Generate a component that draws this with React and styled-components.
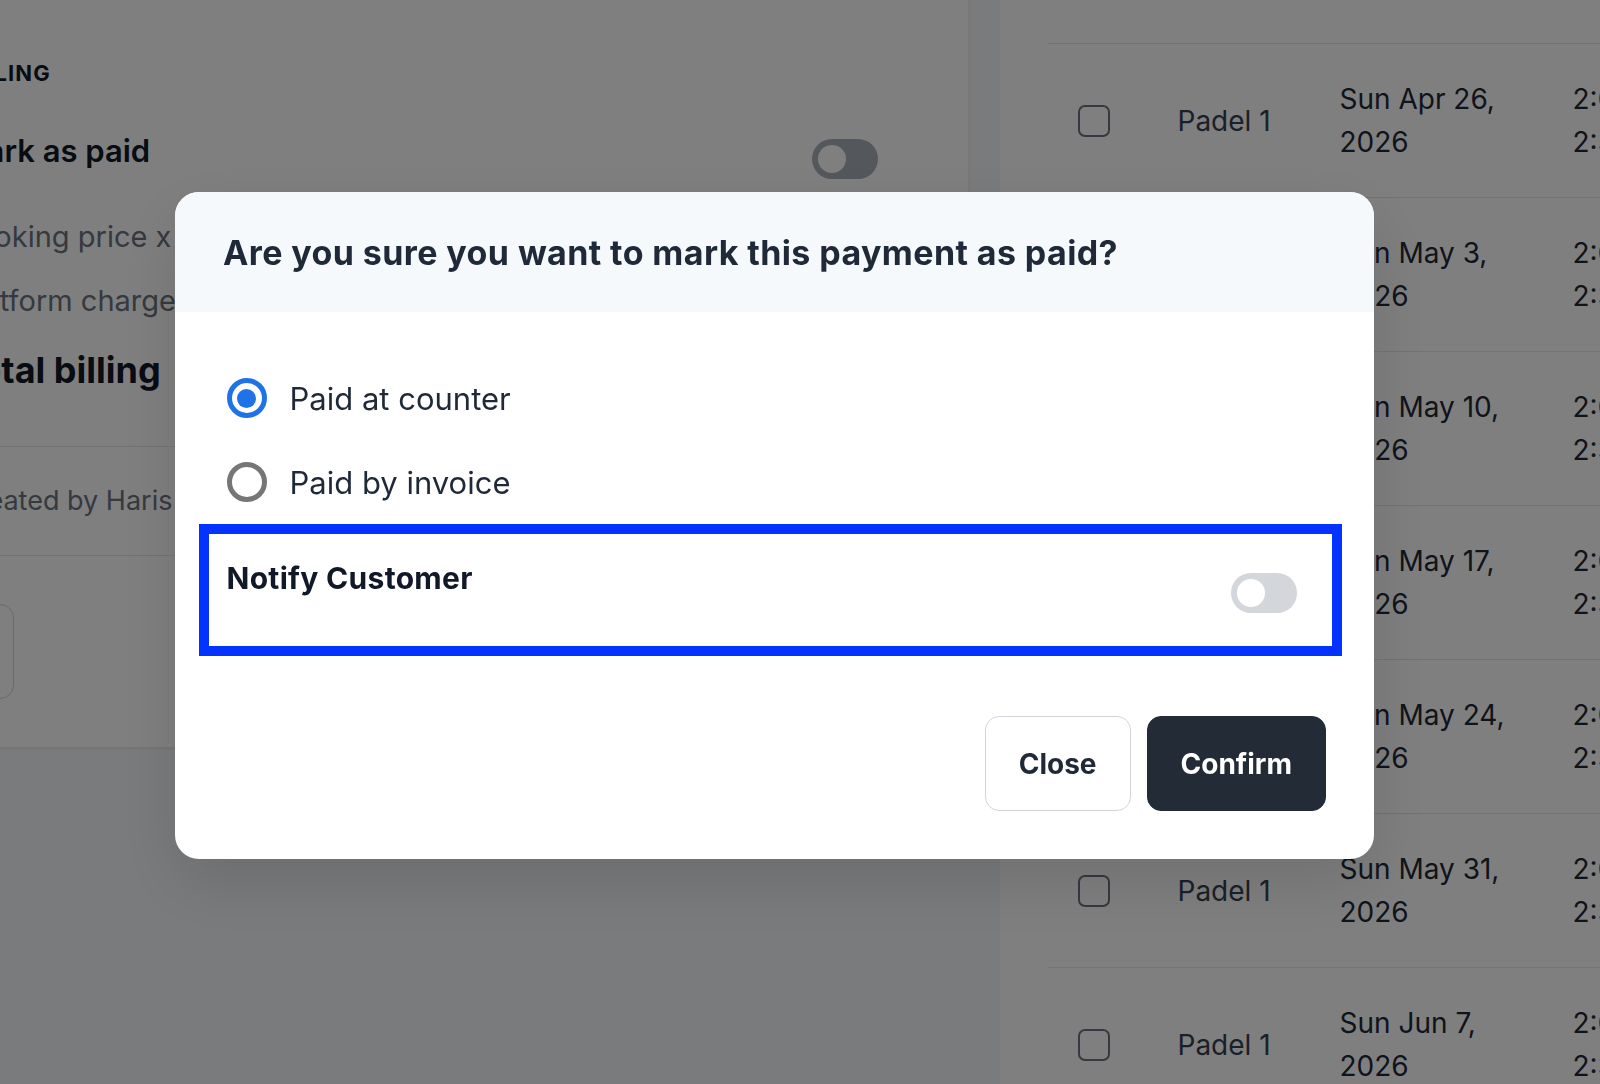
import React from 'react';
import styled, { createGlobalStyle } from 'styled-components';

/* Global */
const GlobalStyle = createGlobalStyle`
    html, body {
        margin: 0;
        padding: 0;
        height: 100%;
    }

    body {
        font-family: Inter, "Noto Sans", "Liberation Sans", sans-serif;
        color: #1f2937;
        overflow: hidden;
    }

    * {
        box-sizing: border-box;
    }
`;

/* Page behind the dialog */
const Page = styled.div`
    display: flex;
    gap: 32px;
    height: 100vh;
    background: #f5f6f8;
    overflow: hidden;
`;

const BillingCard = styled.section`
    flex: none;
    align-self: flex-start;
    width: 1100px;
    margin-left: -132px;
    padding: 59px 90px 48px;
    background: #fff;
    box-shadow: 0 1px 3px rgba(16, 24, 40, 0.08);
`;

const SectionTitle = styled.h4`
    margin: 0;
    font-size: 22px;
    line-height: 28px;
    font-weight: 700;
    letter-spacing: 0.05em;
    text-transform: uppercase;
    color: #111827;
`;

const SettingRow = styled.div`
    display: flex;
    justify-content: space-between;
    align-items: flex-start;
    margin-top: 46px;

    span {
        font-size: 31px;
        line-height: 36px;
        font-weight: 600;
        color: #111827;
    }
`;

const LineItem = styled.div`
    display: flex;
    justify-content: space-between;
    margin-top: ${p => p.$gap}px;
    font-size: ${p => (p.$total ? 36 : 29)}px;
    line-height: ${p => (p.$total ? 44 : 40)}px;
    font-weight: ${p => (p.$total ? 700 : 400)};
    color: ${p => (p.$total ? '#111827' : '#6b7280')};
`;

const Divider = styled.hr`
    margin: ${p => p.$top}px 0 0;
    border: none;
    border-top: 1px solid #e5e7eb;
`;

const MetaText = styled.p`
    margin: 36px 0;
    font-size: 27px;
    line-height: 36px;
    color: #6b7280;
`;

const GhostButton = styled.div`
    width: 56px;
    height: 95px;
    margin-top: 48px;
    border: 1px solid #d1d5db;
    border-radius: 14px;
`;

const Track = styled.span`
    flex: none;
    display: flex;
    align-items: center;
    width: 66px;
    height: 40px;
    margin-top: ${p => p.$offset}px;
    padding: 0 6px;
    border-radius: 20px;
    background: ${p => p.$color};
`;

const Knob = styled.span`
    width: 28px;
    height: 28px;
    border-radius: 50%;
    background: #fff;
`;

const BookingsCard = styled.section`
    flex: 1 0 700px;
    padding: 43px 0 0 48px;
    background: #fff;
`;

const BookingRow = styled.div`
    display: grid;
    grid-template-columns: 100px 162px 233px 200px;
    align-items: center;
    height: 154px;
    padding-left: 29.5px;
    border-top: 1px solid #e5e7eb;
    font-size: 28px;
    color: #374151;
`;

const Checkbox = styled.span`
    width: 32px;
    height: 32px;
    border: 2px solid #6b7280;
    border-radius: 7px;
`;

const Stack = styled.div`
    line-height: 43px;
    white-space: nowrap;
    color: #1f2937;
`;

/* Dialog */
const Overlay = styled.div`
    position: fixed;
    inset: 0;
    display: flex;
    align-items: flex-start;
    padding: 192px 0 0 175px;
    background: rgba(0, 0, 0, 0.5);
`;

const Modal = styled.div`
    width: 1199px;
    overflow: hidden;
    border-radius: 24px;
    background: #fff;
    box-shadow: 0 24px 64px rgba(0, 0, 0, 0.12);
`;

const ModalHeader = styled.header`
    display: flex;
    align-items: center;
    height: 120px;
    padding: 0 48px;
    background: #f5f9fc;

    h2 {
        margin: 0;
        font-size: 34px;
        font-weight: 700;
        letter-spacing: 0.4px;
        color: #1f2937;
    }
`;

const ModalBody = styled.div`
    padding: 44px 48px 48px;
`;

const RadioRow = styled.label`
    display: flex;
    align-items: center;
    gap: 23px;
    height: 84px;
    font-size: 31px;
    color: #1f2937;
`;

const RadioMark = styled.span`
    flex: none;
    display: flex;
    align-items: center;
    justify-content: center;
    width: 40px;
    height: 40px;
    margin-left: 3.5px;
    border: 5px solid ${p => (p.$checked ? '#1f73e6' : '#767676')};
    border-radius: 50%;

    &::after {
        content: '';
        display: ${p => (p.$checked ? 'block' : 'none')};
        width: 19px;
        height: 19px;
        border-radius: 50%;
        background: #1f73e6;
    }
`;

const NotifyBox = styled.div`
    display: flex;
    justify-content: space-between;
    align-items: flex-start;
    height: 132px;
    margin: 0 -16px 0 -24px;
    padding: 0 35px 0 17.5px;
    border: 10px solid #0433ff;

    strong {
        margin-top: 25px;
        font-size: 30px;
        line-height: 38px;
        font-weight: 700;
        letter-spacing: 0.3px;
        color: #111827;
    }
`;

const Footer = styled.div`
    display: flex;
    justify-content: flex-end;
    gap: 16px;
    margin-top: 60px;
`;

const Button = styled.button`
    height: 95px;
    padding: 0 33px;
    border: 1px solid ${p => (p.$primary ? '#222b36' : '#d1d5db')};
    border-radius: 14px;
    background: ${p => (p.$primary ? '#222b36' : '#fff')};
    color: ${p => (p.$primary ? '#fff' : '#1f2937')};
    font-family: inherit;
    font-size: 28px;
    font-weight: 700;
`;

const Toggle = ({ color, offset }) => (
    <Track $color={color} $offset={offset}>
        <Knob />
    </Track>
);

const bookings = [
    'Sun Apr 26,',
    'Sun May 3,',
    'Sun May 10,',
    'Sun May 17,',
    'Sun May 24,',
    'Sun May 31,',
    'Sun Jun 7,',
];

const App = () => {
    return (
        <>
            <GlobalStyle />
            <Page>
                <BillingCard>
                    <SectionTitle>Billing</SectionTitle>
                    <SettingRow>
                        <span>Mark as paid</span>
                        <Toggle color="#a8b0bb" offset={6} />
                    </SettingRow>
                    <LineItem $gap={38}>
                        <span>Booking price x 1</span>
                        <span>€40.00</span>
                    </LineItem>
                    <LineItem $gap={24}>
                        <span>Platform charge</span>
                        <span>€0.00</span>
                    </LineItem>
                    <LineItem $gap={27} $total>
                        <span>Total billing</span>
                        <span>€40.00</span>
                    </LineItem>
                    <Divider $top={54} />
                    <MetaText>Created by Haris</MetaText>
                    <Divider $top={0} />
                    <GhostButton />
                </BillingCard>

                <BookingsCard>
                    {bookings.map(date => (
                        <BookingRow key={date}>
                            <Checkbox />
                            <span>Padel 1</span>
                            <Stack>
                                {date}
                                <br />
                                2026
                            </Stack>
                            <Stack>
                                2:00 PM -
                                <br />
                                2:30 PM
                            </Stack>
                        </BookingRow>
                    ))}
                </BookingsCard>
            </Page>

            <Overlay>
                <Modal>
                    <ModalHeader>
                        <h2>Are you sure you want to mark this payment as paid?</h2>
                    </ModalHeader>
                    <ModalBody>
                        <RadioRow>
                            <RadioMark $checked />
                            Paid at counter
                        </RadioRow>
                        <RadioRow>
                            <RadioMark />
                            Paid by invoice
                        </RadioRow>
                        <NotifyBox>
                            <strong>Notify Customer</strong>
                            <Toggle color="#d3d6da" offset={39} />
                        </NotifyBox>
                        <Footer>
                            <Button>Close</Button>
                            <Button $primary>Confirm</Button>
                        </Footer>
                    </ModalBody>
                </Modal>
            </Overlay>
        </>
    );
};

export default App;
